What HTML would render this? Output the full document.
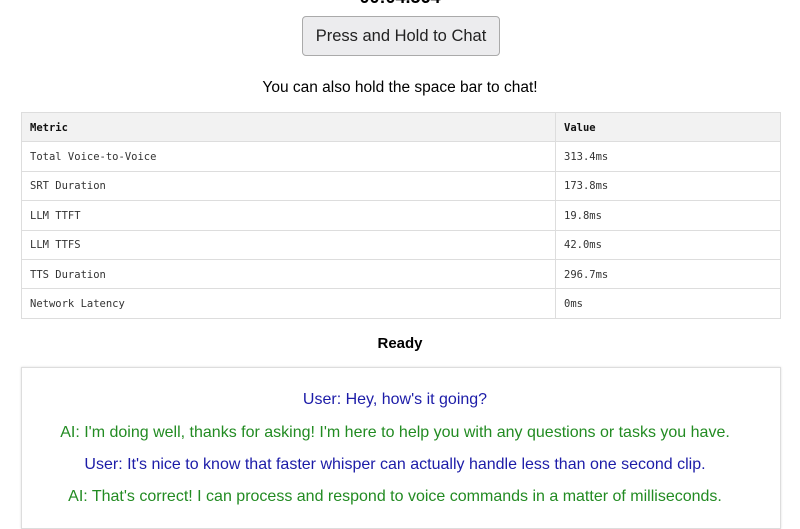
<!DOCTYPE html>
<html><head><meta charset="utf-8"><style>
body{margin:0;background:#fff;width:800px;height:500px;overflow:hidden;font-family:"Liberation Sans",sans-serif;color:#000;position:relative}
.timer{position:absolute;top:-13px;left:0;width:800px;text-align:center;font-weight:bold;font-size:18px}
.btn{position:absolute;left:302px;top:16px;border:1px solid #aaa;border-radius:4px;background:#ececee;font-family:"Liberation Sans",sans-serif;font-size:16.5px;color:#222;text-align:center;line-height:39px;box-sizing:border-box;width:198px;height:40px}
.hint{position:absolute;top:79px;left:0;width:800px;text-align:center;font-size:15.5px}
table{position:absolute;left:21px;top:112px;width:760px;border-collapse:collapse;font-family:"DejaVu Sans Mono","Liberation Mono",monospace;font-size:10.5px;color:#333}
td,th{border:1px solid #ddd;height:27.4px;padding:1px 0 0 8px;text-align:left}
th{background:#f2f2f2;font-weight:bold;color:#111}
td:first-child,th:first-child{width:525px}
.ready{position:absolute;top:335px;left:0;width:800px;text-align:center;font-weight:bold;font-size:15px}
.chat{position:absolute;left:21px;top:367px;width:758px;height:160px;border:1px solid #ddd;box-shadow:0 0 2px #ddd}
.chat p{margin:0;position:absolute;left:-6px;width:758px;text-align:center;font-size:16px}
.u{color:#1c1ca8}.a{color:#228b22}
</style></head><body>
<div class="timer">00:04.564</div>
<div class="btn">Press and Hold to Chat</div>
<div class="hint">You can also hold the space bar to chat!</div>
<table>
<tr><th>Metric</th><th>Value</th></tr>
<tr><td>Total Voice-to-Voice</td><td>313.4ms</td></tr>
<tr><td>SRT Duration</td><td>173.8ms</td></tr>
<tr><td>LLM TTFT</td><td>19.8ms</td></tr>
<tr><td>LLM TTFS</td><td>42.0ms</td></tr>
<tr><td>TTS Duration</td><td>296.7ms</td></tr>
<tr><td>Network Latency</td><td>0ms</td></tr>
</table>
<div class="ready">Ready</div>
<div class="chat">
<p class="u" style="top:23px">User: Hey, how's it going?</p>
<p class="a" style="top:56px">AI: I'm doing well, thanks for asking! I'm here to help you with any questions or tasks you have.</p>
<p class="u" style="top:88px">User: It's nice to know that faster whisper can actually handle less than one second clip.</p>
<p class="a" style="top:120px">AI: That's correct! I can process and respond to voice commands in a matter of milliseconds.</p>
</div>
</body></html>
